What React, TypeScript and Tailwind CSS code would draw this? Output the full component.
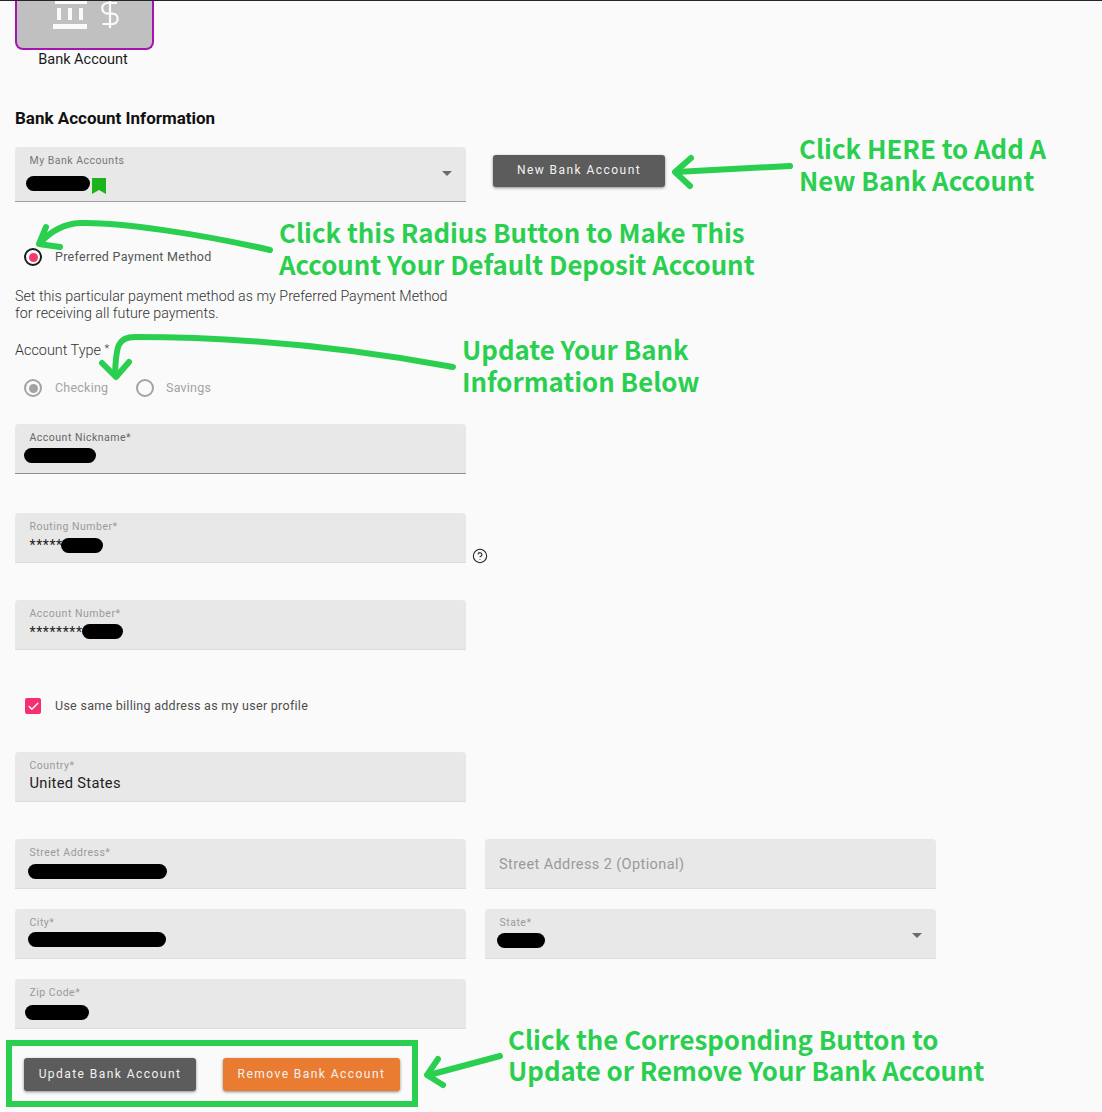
import React from "react";
import { CircleHelp, Check } from "lucide-react";

function Pill({ className }: { className: string }) {
  return <span className={`block h-[15px] shrink-0 rounded-full bg-black ${className}`} />;
}

function Caret() {
  return (
    <svg width="10" height="5" viewBox="0 0 10 5" className="absolute right-[14px] top-[24px]">
      <path d="M0 0h10L5 5z" fill="#6b6b6b" />
    </svg>
  );
}

function Field({
  label,
  labelClass = "text-[#9a9a9a]",
  border = "border-[#dcdcdc]",
  height = "h-[50px]",
  children,
}: {
  label: string;
  labelClass?: string;
  border?: string;
  height?: string;
  children?: React.ReactNode;
}) {
  return (
    <div className={`relative w-[451px] shrink-0 rounded-t-[4px] border-b bg-[#e8e8e8] px-[14.5px] pt-[7px] ${border} ${height}`}>
      <div className={`text-[10.5px] leading-[14px] tracking-[0.5px] ${labelClass}`}>{label}</div>
      {children}
    </div>
  );
}

function Radio({ tone }: { tone: "active" | "muted" | "empty" }) {
  const ring = tone === "active" ? "border-[#1c1c1c]" : "border-[#a3a3a3]";
  return (
    <span className={`flex h-[18px] w-[18px] shrink-0 items-center justify-center rounded-full border-2 ${ring}`}>
      {tone === "active" && <span className="h-[9px] w-[9px] rounded-full bg-[#f7386c]" />}
      {tone === "muted" && <span className="h-[9px] w-[9px] rounded-full bg-[#a3a3a3]" />}
    </span>
  );
}

function Button({ children, className }: { children: React.ReactNode; className: string }) {
  return (
    <button className={`flex items-center justify-center rounded-[3px] pb-[2px] text-[12px] font-normal tracking-[1.45px] text-[#f2f2f2] shadow-[0_1px_3px_rgba(0,0,0,0.45)] ${className}`}>
      {children}
    </button>
  );
}

const note = "absolute whitespace-nowrap font-bold text-[#2bcf50] [font-family:'Noto_Sans_CJK_JP','Noto_Sans',sans-serif]";

export default function App() {
  return (
    <div className="relative h-[1112px] w-full overflow-hidden bg-[#fafafa] [font-family:Roboto,'Liberation_Sans',sans-serif]">
      <div className="h-px bg-[#23252b]" />

      <div className="pl-[15px]">
        <div className="flex h-[49px] w-[139px] items-start justify-center gap-[12px] overflow-hidden rounded-b-[8px] border-2 border-t-0 border-[#a516b0] bg-[#c0c0c0] pl-[2px]">
          <svg width="36" height="28" viewBox="0 0 36 28" fill="#fafafa">
            <rect x="2" y="0" width="32" height="3" />
            <rect x="4" y="7" width="4" height="12" />
            <rect x="15" y="7" width="4" height="12" />
            <rect x="26" y="7" width="4" height="12" />
            <rect x="0" y="23" width="34" height="5" />
          </svg>
          <svg width="18" height="30" viewBox="0 0 18 30" fill="none" stroke="#fafafa" strokeWidth="2.2" className="-mt-[1px]">
            <path d="M9 0v28" />
            <path d="M16 3H6.5a4.8 4.8 0 0 0 0 10.6h5a4.8 4.8 0 0 1 0 10.4H1.5" />
          </svg>
        </div>
        <div className="w-[136px] pt-px text-center text-[14.5px] leading-[18px] text-[#1a1a1a]">Bank Account</div>

        <h2 className="mt-[39px] text-[17px] font-bold leading-[20px] text-[#111]">Bank Account Information</h2>

        <div className="mt-[19px] flex items-start gap-[27px]">
          <Field label="My Bank Accounts" labelClass="text-[#777]" border="border-[#9e9e9e]" height="h-[55px]">
            <div className="-ml-[4px] mt-[8px] flex items-start gap-[2px]">
              <Pill className="w-[64px]" />
              <svg width="14" height="16" viewBox="0 0 14 16" className="mt-[2px]">
                <path d="M0 0h14v16l-7-4-7 4z" fill="#1db31d" />
              </svg>
            </div>
            <Caret />
          </Field>
          <Button className="mt-[8px] h-[32px] w-[172px] bg-[#5c5c5c]">New Bank Account</Button>
        </div>

        <label className="ml-[9px] mt-[43px] flex h-[24px] items-center gap-[13px] text-[12.5px] tracking-[0.3px] text-[#555]">
          <Radio tone="active" />
          <span className="pt-px">Preferred Payment Method</span>
        </label>

        <p className="mt-[19px] w-[445px] text-[14.27px] font-light leading-[17px] text-[#333]">
          Set this particular payment method as my Preferred Payment Method for receiving all future payments.
        </p>

        <div className="mt-[19px] h-[20px] text-[14.4px] font-light leading-[20px] text-[#333]">
          Account Type <span className="relative -top-[3px] text-[11px]">*</span>
        </div>

        <div className="ml-[9px] mt-[15px] flex h-[24px] items-center text-[12.5px] tracking-[0.22px] text-[#a3a3a3]">
          <label className="flex w-[112px] items-center gap-[13px]">
            <Radio tone="muted" />
            <span className="pt-px">Checking</span>
          </label>
          <label className="flex items-center gap-[12px]">
            <Radio tone="empty" />
            <span className="pt-px">Savings</span>
          </label>
        </div>

        <div className="mt-[24px]">
          <Field label="Account Nickname*" labelClass="text-[#666]" border="border-[#8f8f8f]">
            <Pill className="-ml-[5.5px] mt-[3px] w-[72px]" />
          </Field>
        </div>

        <div className="mt-[39px] flex items-end gap-[6px]">
          <Field label="Routing Number*">
            <div className="mt-[3px] flex items-start">
              <span className="text-[14px] leading-[16px] tracking-[0.6px] text-[#222]">*****</span>
              <Pill className="-ml-[2px] mt-[1px] w-[42px]" />
            </div>
          </Field>
          <CircleHelp size={16} strokeWidth={1.6} color="#222" className="-mb-px" />
        </div>

        <div className="mt-[37px]">
          <Field label="Account Number*">
            <div className="mt-[3px] flex items-start">
              <span className="text-[14px] leading-[16px] tracking-[0.6px] text-[#222]">********</span>
              <Pill className="-ml-[1px] w-[41px]" />
            </div>
          </Field>
        </div>

        <label className="ml-[10px] mt-[44px] flex h-[24px] items-center gap-[14px] text-[12.5px] tracking-[0.28px] text-[#4d4d4d]">
          <span className="flex h-[16px] w-[16px] items-center justify-center rounded-[2px] bg-[#f6306f]">
            <Check size={13} strokeWidth={2.4} color="#fff" />
          </span>
          Use same billing address as my user profile
        </label>

        <div className="mt-[34px]">
          <Field label="Country*">
            <div className="text-[14.7px] leading-[20px] tracking-[0.3px] text-[#222]">United States</div>
          </Field>
        </div>

        <div className="mt-[37px] flex gap-[19px]">
          <Field label="Street Address*">
            <Pill className="-ml-[1.5px] mt-[4px] w-[139px]" />
          </Field>
          <div className="flex h-[50px] w-[451px] items-center rounded-t-[4px] border-b border-[#dcdcdc] bg-[#e8e8e8] px-[14px] pt-[3px] text-[14.5px] tracking-[0.4px] text-[#9a9a9a]">
            Street Address 2 (Optional)
          </div>
        </div>

        <div className="mt-[20px] flex gap-[19px]">
          <Field label="City*">
            <Pill className="-ml-[1.5px] mt-[2px] w-[138px]" />
          </Field>
          <Field label="State*">
            <Pill className="-ml-[3px] mt-[3px] w-[48px]" />
            <Caret />
          </Field>
        </div>

        <div className="mt-[20px]">
          <Field label="Zip Code*">
            <Pill className="-ml-[4.5px] mt-[5px] w-[64px]" />
          </Field>
        </div>

        <div className="ml-[9px] mt-[29px] flex gap-[27px]">
          <Button className="h-[33px] w-[172px] bg-[#5c5c5c]">Update Bank Account</Button>
          <Button className="h-[33px] w-[177px] bg-[#ea7c31]">Remove Bank Account</Button>
        </div>
      </div>

      {/* annotation layer drawn over the page */}
      <div className="pointer-events-none absolute left-[6px] top-[1040px] h-[67px] w-[412px] border-[6px] border-[#2bcf50]" />
      <svg width="1102" height="1112" viewBox="0 0 1102 1112" fill="none" stroke="#2bcf50" strokeWidth="6" strokeLinecap="round" strokeLinejoin="round" className="pointer-events-none absolute left-0 top-0">
        <path d="M790 166 L676 172" />
        <path d="M691 158 L675 172 L690 186" />
        <path d="M270 250 C200 234 120 222 80 223 C62 224 50 232 40 243" />
        <path d="M46 227 L39 244 L60 247" />
        <path d="M453 367 C340 346 230 337 135 337 C118 337 116 345 115 375" />
        <path d="M102 363 L116 377 L129 362" />
        <path d="M500 1056 L429 1075" />
        <path d="M438 1059 L427 1075 L443 1085" />
      </svg>

      <div className={`${note} left-[799px] top-[132px] text-[25.8px] leading-[32px]`}>Click HERE to Add A<br />New Bank Account</div>
      <div className={`${note} left-[279px] top-[216px] text-[25.8px] leading-[32px]`}>Click this Radius Button to Make This<br />Account Your Default Deposit Account</div>
      <div className={`${note} left-[462px] top-[333px] text-[25.8px] leading-[32px]`}>Update Your Bank<br />Information Below</div>
      <div className={`${note} left-[508px] top-[1023px] text-[25.8px] leading-[31px]`}>Click the Corresponding Button to<br />Update or Remove Your Bank Account</div>
    </div>
  );
}
